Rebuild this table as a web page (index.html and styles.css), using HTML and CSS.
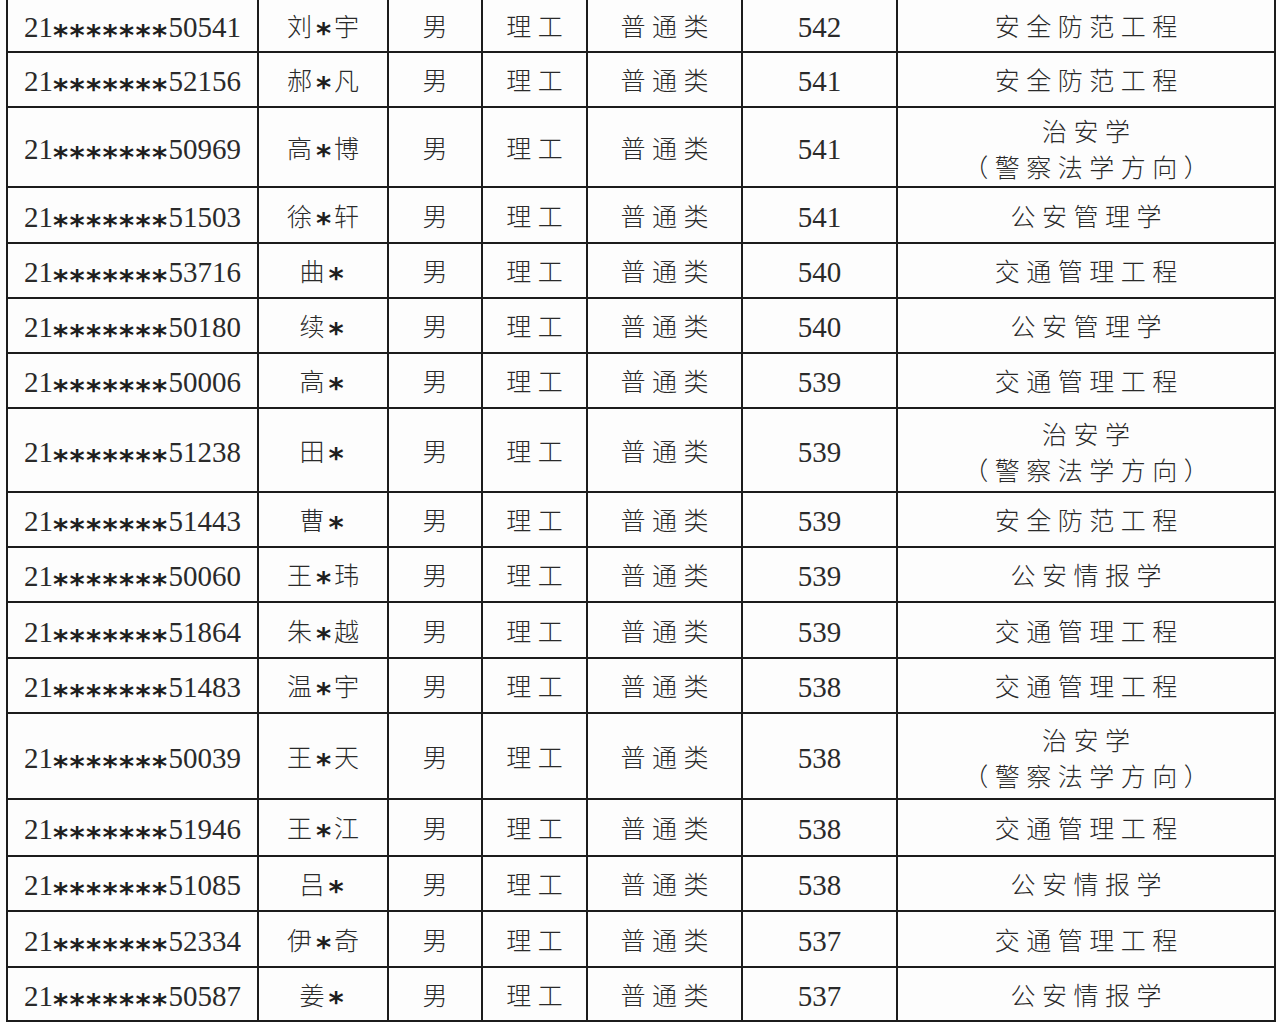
FILE: index.html
```html
<!DOCTYPE html>
<html lang="zh-CN">
<head>
<meta charset="utf-8">
<title>录取名单</title>
<link rel="stylesheet" href="styles.css">
</head>
<body>
<div class="sheet">
  <div class="row"><div class="c id">21<span class="ast">*******</span>50541</div><div class="c nm">刘<span class="st">*</span>宇</div><div class="c cj">男</div><div class="c cj">理工</div><div class="c cj">普通类</div><div class="c num">542</div><div class="c cj">安全防范工程</div></div>
  <div class="row"><div class="c id">21<span class="ast">*******</span>52156</div><div class="c nm">郝<span class="st">*</span>凡</div><div class="c cj">男</div><div class="c cj">理工</div><div class="c cj">普通类</div><div class="c num">541</div><div class="c cj">安全防范工程</div></div>
  <div class="row"><div class="c id">21<span class="ast">*******</span>50969</div><div class="c nm">高<span class="st">*</span>博</div><div class="c cj">男</div><div class="c cj">理工</div><div class="c cj">普通类</div><div class="c num">541</div><div class="c cj two"><span>治安学</span><span>（警察法学方向）</span></div></div>
  <div class="row"><div class="c id">21<span class="ast">*******</span>51503</div><div class="c nm">徐<span class="st">*</span>轩</div><div class="c cj">男</div><div class="c cj">理工</div><div class="c cj">普通类</div><div class="c num">541</div><div class="c cj">公安管理学</div></div>
  <div class="row"><div class="c id">21<span class="ast">*******</span>53716</div><div class="c nm">曲<span class="st">*</span></div><div class="c cj">男</div><div class="c cj">理工</div><div class="c cj">普通类</div><div class="c num">540</div><div class="c cj">交通管理工程</div></div>
  <div class="row"><div class="c id">21<span class="ast">*******</span>50180</div><div class="c nm">续<span class="st">*</span></div><div class="c cj">男</div><div class="c cj">理工</div><div class="c cj">普通类</div><div class="c num">540</div><div class="c cj">公安管理学</div></div>
  <div class="row"><div class="c id">21<span class="ast">*******</span>50006</div><div class="c nm">高<span class="st">*</span></div><div class="c cj">男</div><div class="c cj">理工</div><div class="c cj">普通类</div><div class="c num">539</div><div class="c cj">交通管理工程</div></div>
  <div class="row"><div class="c id">21<span class="ast">*******</span>51238</div><div class="c nm">田<span class="st">*</span></div><div class="c cj">男</div><div class="c cj">理工</div><div class="c cj">普通类</div><div class="c num">539</div><div class="c cj two"><span>治安学</span><span>（警察法学方向）</span></div></div>
  <div class="row"><div class="c id">21<span class="ast">*******</span>51443</div><div class="c nm">曹<span class="st">*</span></div><div class="c cj">男</div><div class="c cj">理工</div><div class="c cj">普通类</div><div class="c num">539</div><div class="c cj">安全防范工程</div></div>
  <div class="row"><div class="c id">21<span class="ast">*******</span>50060</div><div class="c nm">王<span class="st">*</span>玮</div><div class="c cj">男</div><div class="c cj">理工</div><div class="c cj">普通类</div><div class="c num">539</div><div class="c cj">公安情报学</div></div>
  <div class="row"><div class="c id">21<span class="ast">*******</span>51864</div><div class="c nm">朱<span class="st">*</span>越</div><div class="c cj">男</div><div class="c cj">理工</div><div class="c cj">普通类</div><div class="c num">539</div><div class="c cj">交通管理工程</div></div>
  <div class="row"><div class="c id">21<span class="ast">*******</span>51483</div><div class="c nm">温<span class="st">*</span>宇</div><div class="c cj">男</div><div class="c cj">理工</div><div class="c cj">普通类</div><div class="c num">538</div><div class="c cj">交通管理工程</div></div>
  <div class="row"><div class="c id">21<span class="ast">*******</span>50039</div><div class="c nm">王<span class="st">*</span>天</div><div class="c cj">男</div><div class="c cj">理工</div><div class="c cj">普通类</div><div class="c num">538</div><div class="c cj two"><span>治安学</span><span>（警察法学方向）</span></div></div>
  <div class="row"><div class="c id">21<span class="ast">*******</span>51946</div><div class="c nm">王<span class="st">*</span>江</div><div class="c cj">男</div><div class="c cj">理工</div><div class="c cj">普通类</div><div class="c num">538</div><div class="c cj">交通管理工程</div></div>
  <div class="row"><div class="c id">21<span class="ast">*******</span>51085</div><div class="c nm">吕<span class="st">*</span></div><div class="c cj">男</div><div class="c cj">理工</div><div class="c cj">普通类</div><div class="c num">538</div><div class="c cj">公安情报学</div></div>
  <div class="row"><div class="c id">21<span class="ast">*******</span>52334</div><div class="c nm">伊<span class="st">*</span>奇</div><div class="c cj">男</div><div class="c cj">理工</div><div class="c cj">普通类</div><div class="c num">537</div><div class="c cj">交通管理工程</div></div>
  <div class="row"><div class="c id">21<span class="ast">*******</span>50587</div><div class="c nm">姜<span class="st">*</span></div><div class="c cj">男</div><div class="c cj">理工</div><div class="c cj">普通类</div><div class="c num">537</div><div class="c cj">公安情报学</div></div>
</div>
</body>
</html>
```
FILE: styles.css
```css
html, body {
  margin: 0;
  padding: 0;
  background: #fdfdfd;
  overflow: hidden;
}

.sheet {
  display: grid;
  grid-template-columns: 249px 128px 92px 103px 153px 153px 376px;
  grid-template-rows: 51px 53px 78px 54px 53px 53px 53px 82px 53px 53px 54px 53px 84px 55px 53px 54px 52px;
  gap: 2px;
  padding: 0 2px 2px 2px;
  margin-left: 6px;
  width: 1266px;
  background: #1c1c1c;
  color: #2a2a2a;
}

.row {
  display: contents;
}

.c {
  background: #fdfdfd;
  display: flex;
  align-items: center;
  justify-content: center;
  white-space: nowrap;
  line-height: 1;
}

.id, .num {
  font-family: "Liberation Serif", "Times New Roman", serif;
  font-size: 29px;
  padding-top: 4px;
}

.ast {
  display: inline-block;
  font-family: "DejaVu Sans", sans-serif;
  font-weight: bold;
  letter-spacing: 1.3px;
  transform: translateY(0.26em);
  color: #1e1e1e;
}

.nm {
  font-family: "Noto Sans CJK SC", sans-serif;
  font-weight: 300;
  font-size: 25px;
}

.st {
  display: inline-block;
  font-family: "DejaVu Sans", sans-serif;
  font-weight: bold;
  font-size: 29px;
  margin: 0 3px 0 4px;
  transform: translateY(0.26em);
  color: #1e1e1e;
}

.cj {
  font-family: "Noto Sans CJK SC", sans-serif;
  font-weight: 300;
  font-size: 25px;
  letter-spacing: 6.5px;
  padding-left: 6.5px;
}

.two {
  flex-direction: column;
  line-height: 36px;
  padding-top: 2px;
}
```
